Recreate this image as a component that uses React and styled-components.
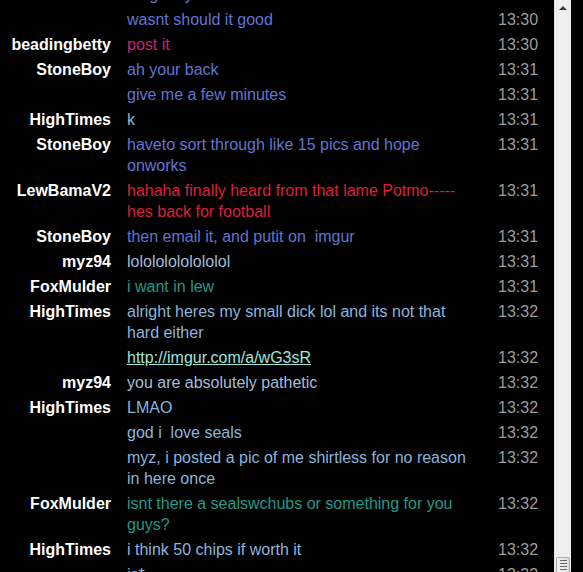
import React from "react";
import styled, { createGlobalStyle } from "styled-components";

const GlobalStyle = createGlobalStyle`
  html, body {
    margin: 0;
    padding: 0;
    background: #000;
    height: 100%;
    overflow: hidden;
  }
  body {
    font-family: "Liberation Sans", Arial, sans-serif;
  }
`;

const colors = {
  StoneBoy: "#6275d2",
  beadingbetty: "#c8237a",
  HighTimes: "#8db4dc",
  LewBamaV2: "#dd1f3c",
  myz94: "#a4bcd8",
  FoxMulder: "#1f9a88",
};

const Screen = styled.div`
  display: flex;
  height: 572px;
  width: 583px;
  background: #000;
`;

const Chat = styled.div`
  width: 554px;
  height: 572px;
  overflow: hidden;
`;

const List = styled.div`
  display: flex;
  flex-direction: column;
  margin-top: -18px;
`;

const Row = styled.div`
  display: flex;
  align-items: flex-start;
  padding: 2px 0;
  font-size: 16px;
  line-height: 21px;
`;

const Name = styled.div`
  width: 111px;
  flex-shrink: 0;
  text-align: right;
  font-weight: bold;
  color: #fff;
`;

const Message = styled.div`
  width: 353px;
  margin-left: 16px;
  margin-right: 18px;
  flex-shrink: 0;
  color: ${(p) => p.$color};
`;

const Link = styled.a`
  color: #a2e4d8;
  text-decoration: underline;
`;

const Time = styled.div`
  color: #9c9c9c;
`;

const Scrollbar = styled.div`
  width: 16px;
  flex-shrink: 0;
  background: #efefef;
  border-left: 1px solid #e4e4e4;
  display: flex;
  flex-direction: column;
  justify-content: space-between;
  align-items: center;
`;

const Arrow = styled.div`
  margin-top: 6px;
  width: 0;
  height: 0;
  border-left: 4px solid transparent;
  border-right: 4px solid transparent;
  border-bottom: 4px solid #3a3a3a;
`;

const Thumb = styled.div`
  width: 14px;
  height: 16px;
  box-sizing: border-box;
  margin-bottom: -1px;
  border: 1px solid #a8a8a8;
  border-radius: 2px;
  background: linear-gradient(to right, #f4f4f4, #dedede);
  display: flex;
  flex-direction: column;
  justify-content: center;
  align-items: center;
  gap: 2px;
`;

const Grip = styled.div`
  width: 7px;
  height: 1px;
  background: #6a6a6a;
`;

const Filler = styled.div`
  flex: 1;
  background: #000;
`;

const messages = [
  { name: "", user: "StoneBoy", text: "omg they", time: "13:30" },
  { name: "", user: "StoneBoy", text: "wasnt should it good", time: "13:30" },
  { name: "beadingbetty", text: "post it", time: "13:30" },
  { name: "StoneBoy", text: "ah your back", time: "13:31" },
  { name: "", user: "StoneBoy", text: "give me a few minutes", time: "13:31" },
  { name: "HighTimes", text: "k", time: "13:31" },
  { name: "StoneBoy", text: "haveto sort through like 15 pics and hope onworks", time: "13:31" },
  { name: "LewBamaV2", text: "hahaha finally heard from that lame Potmo----- hes back for football", time: "13:31" },
  { name: "StoneBoy", text: "then email it, and putit on\u00a0 imgur", time: "13:31" },
  { name: "myz94", text: "lolololololololol", time: "13:31" },
  { name: "FoxMulder", text: "i want in lew", time: "13:31" },
  { name: "HighTimes", text: "alright heres my small dick lol and its not that hard either", time: "13:32" },
  { name: "", user: "HighTimes", link: "http://imgur.com/a/wG3sR", time: "13:32" },
  { name: "myz94", text: "you are absolutely pathetic", time: "13:32" },
  { name: "HighTimes", text: "LMAO", time: "13:32" },
  { name: "", user: "HighTimes", text: "god i\u00a0 love seals", time: "13:32" },
  { name: "", user: "HighTimes", text: "myz, i posted a pic of me shirtless for no reason in here once", time: "13:32" },
  { name: "FoxMulder", text: "isnt there a sealswchubs or something for you guys?", time: "13:32" },
  { name: "HighTimes", text: "i think 50 chips if worth it", time: "13:32" },
  { name: "", user: "HighTimes", text: "is*", time: "13:32" },
];

const App = () => {
  return (
    <>
      <GlobalStyle />
      <Screen>
        <Chat>
          <List>
            {messages.map((m, i) => (
              <Row key={i}>
                <Name>{m.name}</Name>
                <Message $color={colors[m.name || m.user]}>
                  {m.link ? <Link href="#">{m.link}</Link> : m.text}
                </Message>
                <Time>{m.time}</Time>
              </Row>
            ))}
          </List>
        </Chat>
        <Scrollbar>
          <Arrow />
          <Thumb>
            <Grip />
            <Grip />
            <Grip />
            <Grip />
          </Thumb>
        </Scrollbar>
        <Filler />
      </Screen>
    </>
  );
};

export default App;
